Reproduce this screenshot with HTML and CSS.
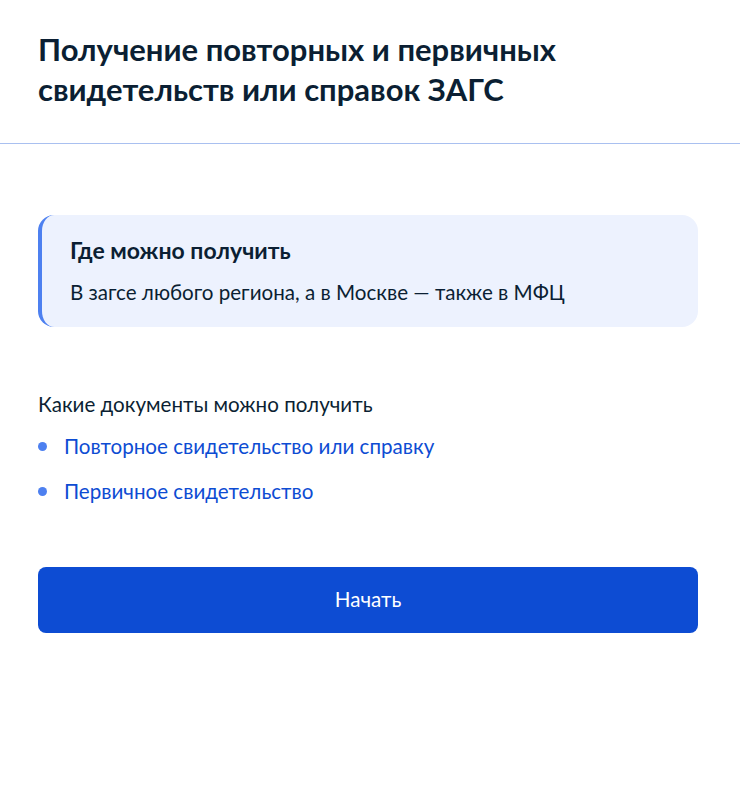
FILE: index.html
```html
<!DOCTYPE html>
<html lang="ru">
<head>
<meta charset="utf-8">
<link rel="stylesheet" href="styles.css">
</head>
<body>
<header class="head">
  <h1 class="title">Получение повторных и первичных свидетельств или справок ЗАГС</h1>
</header>
<main class="content">
  <section class="card">
    <h2 class="card-title">Где можно получить</h2>
    <p class="card-text">В загсе любого региона, а в Москве — также в МФЦ</p>
  </section>
  <section class="docs">
    <p class="docs-title">Какие документы можно получить</p>
    <ul class="docs-list">
      <li class="docs-item"><a class="link" href="#">Повторное свидетельство или справку</a></li>
      <li class="docs-item"><a class="link" href="#">Первичное свидетельство</a></li>
    </ul>
  </section>
  <button class="btn" type="button">Начать</button>
</main>
</body>
</html>
```
FILE: styles.css
```css
* { box-sizing: border-box; }
html, body { margin: 0; padding: 0; background: #fff; }
body {
  font-family: Lato, "Noto Sans", sans-serif;
  color: #0b1f33;
  width: 740px;
}
.head {
  padding: 29px 38px 34px;
  border-bottom: 1px solid #a9c0f0;
}
.title {
  margin: 0;
  font-size: 31px;
  line-height: 40px;
  font-weight: 700;
  max-width: 600px;
}
.content {
  padding: 71px 42px 0 38px;
}
.card {
  background: #edf2fe;
  border-radius: 16px;
  border-left: 4px solid #4d80f0;
  padding: 21px 28px 21px;
}
.card-title {
  margin: 0;
  font-size: 23px;
  line-height: 28px;
  font-weight: 700;
}
.card-text {
  margin: 14px 0 0;
  font-size: 20.6px;
  line-height: 28px;
}
.docs {
  margin-top: 63px;
}
.docs-title {
  margin: 0;
  font-size: 20.6px;
  line-height: 28px;
}
.docs-list {
  list-style: none;
  margin: 14px 0 0;
  padding: 0;
  display: flex;
  flex-direction: column;
  gap: 17px;
}
.docs-item {
  display: flex;
  align-items: center;
  gap: 17px;
  font-size: 20.6px;
  line-height: 28px;
}
.docs-item::before {
  content: "";
  width: 9px;
  height: 9px;
  border-radius: 50%;
  background: #4d80f0;
  margin-left: 0;
  flex: none;
}
.link {
  color: #0d4cd3;
  text-decoration: none;
}
.btn {
  display: block;
  width: 100%;
  margin-top: 62px;
  height: 66px;
  padding: 0 0 3px;
  border: none;
  border-radius: 8px;
  background: #0d4cd3;
  color: #fff;
  font-family: Lato, "Noto Sans", sans-serif;
  font-size: 20.6px;
  cursor: pointer;
}
```
